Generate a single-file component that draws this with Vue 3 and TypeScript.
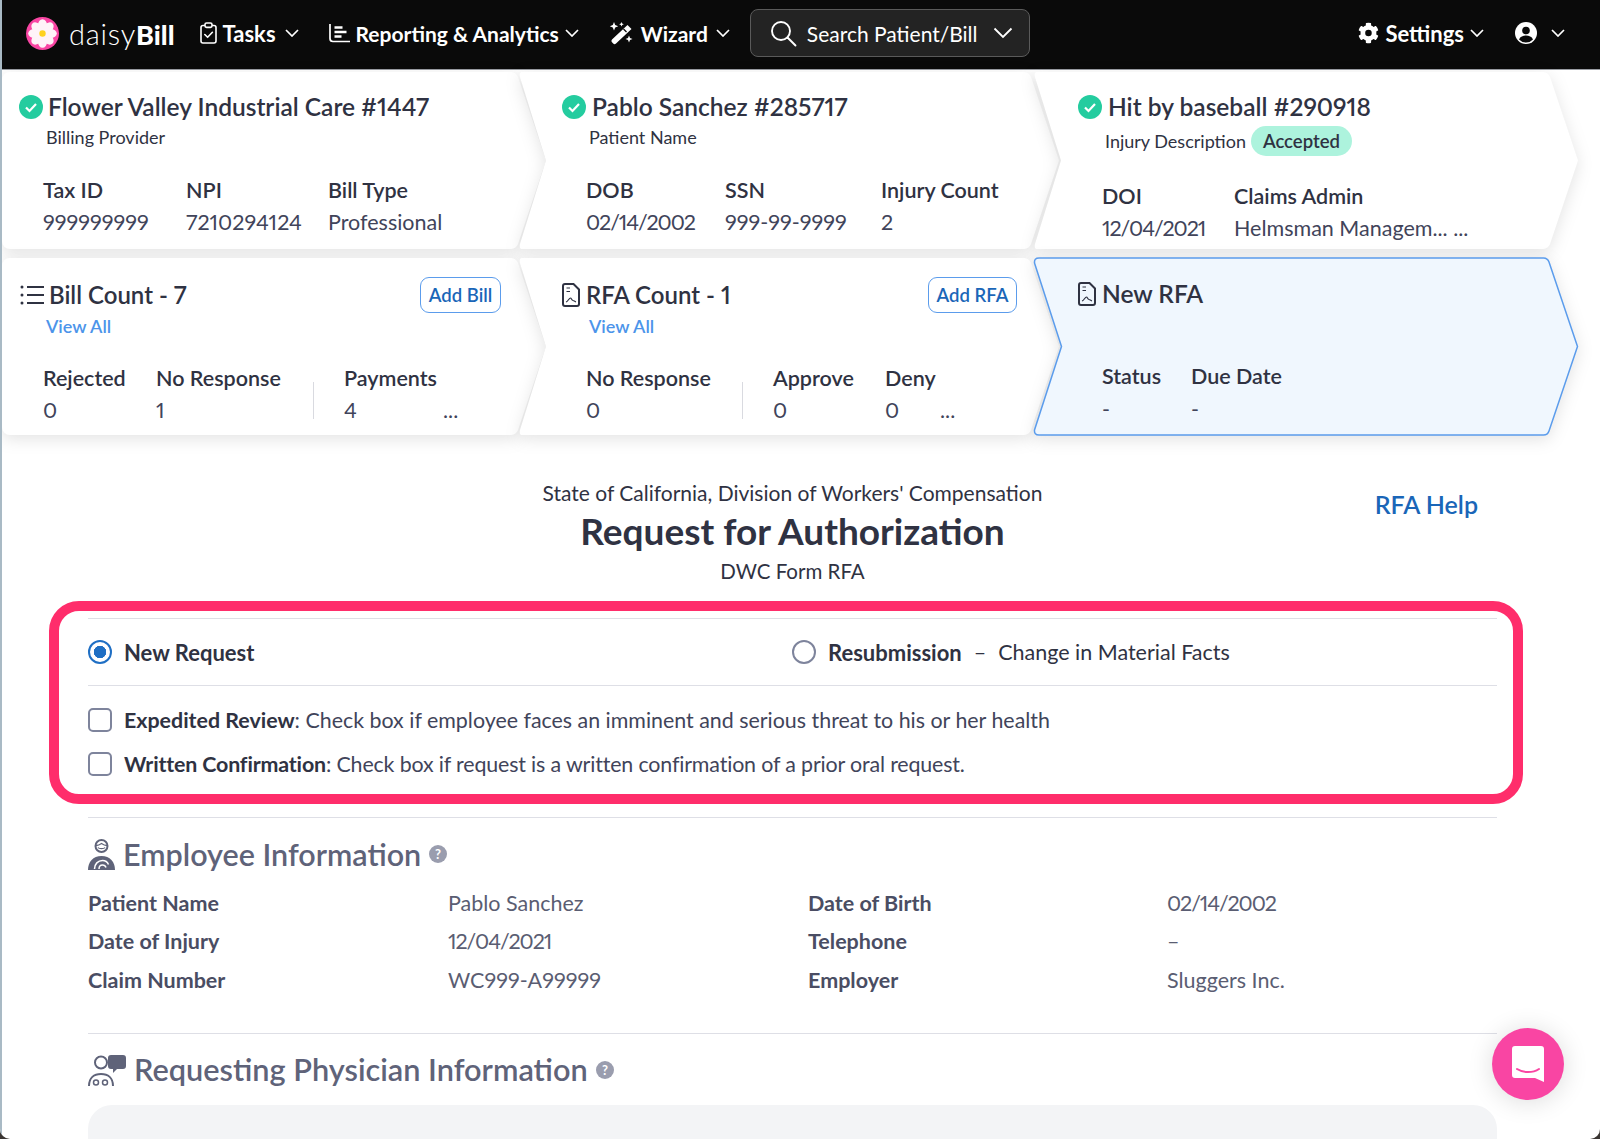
<script setup lang="ts">
interface Cell { label: string; value: string; left: number; date?: boolean }
const c1: Cell[] = [
  { label: 'Tax ID', value: '999999999', left: 41 },
  { label: 'NPI', value: '7210294124', left: 184 },
  { label: 'Bill Type', value: 'Professional', left: 326 },
]
const c2: Cell[] = [
  { label: 'DOB', value: '02/14/2002', left: 66, date: true },
  { label: 'SSN', value: '999-99-9999', left: 205 },
  { label: 'Injury Count', value: '2', left: 361 },
]
const c3: Cell[] = [
  { label: 'DOI', value: '12/04/2021', left: 67, date: true },
  { label: 'Claims Admin', value: 'Helmsman Managem... ...', left: 199 },
]
const c4: Cell[] = [
  { label: 'Rejected', value: '0', left: 41 },
  { label: 'No Response', value: '1', left: 154 },
  { label: 'Payments', value: '4', left: 342 },
]
const c5: Cell[] = [
  { label: 'No Response', value: '0', left: 66 },
  { label: 'Approve', value: '0', left: 253 },
  { label: 'Deny', value: '0', left: 365 },
]
const c6: Cell[] = [
  { label: 'Status', value: '-', left: 67 },
  { label: 'Due Date', value: '-', left: 156 },
]
const info = [
  ['Patient Name', 'Pablo Sanchez', 'Date of Birth', '02/14/2002'],
  ['Date of Injury', '12/04/2021', 'Telephone', '–'],
  ['Claim Number', 'WC999-A99999', 'Employer', 'Sluggers Inc.'],
]
const isDate = (s: string) => /^\d\d\/\d\d\/\d{4}$/.test(s)
const petals = [0, 45, 90, 135, 180, 225, 270, 315]
</script>

<template>
  <div class="page">
    <header class="nav">
      <div class="logo">
        <svg width="33" height="33" viewBox="0 0 33 33">
          <circle cx="16.5" cy="16.5" r="16.5" fill="#f945a3" />
          <ellipse v-for="a in petals" :key="a" cx="16.5" cy="8.6" rx="4.6" ry="6.4" fill="#fff3f8" :transform="`rotate(${a} 16.5 16.5)`" />
          <circle cx="16.5" cy="16.5" r="3.2" fill="#ffd21f" />
        </svg>
        <span class="brand"><span class="thin">daisy</span><b>Bill</b></span>
      </div>
      <div class="nav-item tasks">
        <svg width="17" height="22" viewBox="0 0 17 22" fill="none" stroke="#fff" stroke-width="1.6">
          <rect x="1" y="3.5" width="15" height="17.5" rx="2" />
          <rect x="5" y="1" width="7" height="4.4" rx="1.6" fill="#0a0a0a" />
          <path d="M4.8 12.5l2.8 2.8 4.8-5" stroke-linecap="round" stroke-linejoin="round" />
        </svg>
        <span>Tasks</span>
        <svg class="chev" width="14" height="8" viewBox="0 0 14 8" fill="none" stroke="#fff" stroke-width="1.7"><path d="M1 1l6 6 6-6" /></svg>
      </div>
      <div class="nav-item reporting">
        <svg width="21" height="20" viewBox="0 0 21 20" fill="none" stroke="#fff" stroke-width="1.7">
          <path d="M1 1v14.5a3 3 0 003 3h17" />
          <path d="M5.5 4.5h8M5.5 9h12M5.5 13.500h7" stroke-width="2.300" />
        </svg>
        <span>Reporting &amp; Analytics</span>
        <svg class="chev" width="14" height="8" viewBox="0 0 14 8" fill="none" stroke="#fff" stroke-width="1.7"><path d="M1 1l6 6 6-6" /></svg>
      </div>
      <div class="nav-item wizard">
        <svg width="24" height="23" viewBox="0 0 24 23" fill="#fff">
          <path d="M18.500 3l4 4L7 21.500a2 2 0 01-2.800 0l-1.200-1.200a2 2 0 010-2.800z" />
          <path d="M5 0l1.200 3 3 1.200-3 1.200L5 8.500 3.800 5.400l-3-1.200 3-1.200zM20 13.500l1 2.500 2.500 1-2.500 1-1 2.500-1-2.500-2.500-1 2.500-1zM12.500 0l.7 1.600 1.600.7-1.600.7-.7 1.600-.7-1.600-1.600-.7 1.600-.7z" />
          <path d="M14.500 7l3 3" stroke="#0a0a0a" stroke-width="1.200" />
        </svg>
        <span>Wizard</span>
        <svg class="chev" width="14" height="8" viewBox="0 0 14 8" fill="none" stroke="#fff" stroke-width="1.7"><path d="M1 1l6 6 6-6" /></svg>
      </div>
      <div class="search">
        <svg width="27" height="27" viewBox="0 0 27 27" fill="none" stroke="#fff" stroke-width="1.900">
          <circle cx="11" cy="11" r="9" /><path d="M17.500 17.500l8 8" stroke-linecap="round" />
        </svg>
        <span>Search Patient/Bill</span>
        <svg width="20" height="12" viewBox="0 0 20 12" fill="none" stroke="#fff" stroke-width="1.800"><path d="M1.500 1.500l8.500 8.500 8.500-8.500" /></svg>
      </div>
      <div class="nav-item settings">
        <svg width="21" height="22" viewBox="0 0 512 512" fill="#fff">
          <path d="M487 316l-42-25a190 190 0 000-70l42-25c5-3 7-9 5-14a249 249 0 00-55-95c-4-4-10-5-15-2l-42 24a190 190 0 00-61-35V26c0-6-4-11-9-12a251 251 0 00-110 0c-5 1-9 6-9 12v48a190 190 0 00-61 35L88 85c-5-3-11-2-15 2a248 248 0 00-55 95c-2 5 0 11 5 14l42 25a190 190 0 000 70l-42 25c-5 3-7 9-5 14a249 249 0 0055 95c4 4 10 5 15 2l42-24a190 190 0 0061 35v48c0 6 4 11 9 12a251 251 0 00110 0c5-1 9-6 9-12v-48a190 190 0 0061-35l42 24c5 3 11 2 15-2a248 248 0 0055-95c2-5 0-11-5-14zM255 336a80 80 0 110-160 80 80 0 010 160z" />
        </svg>
        <span>Settings</span>
        <svg class="chev" width="14" height="8" viewBox="0 0 14 8" fill="none" stroke="#fff" stroke-width="1.7"><path d="M1 1l6 6 6-6" /></svg>
      </div>
      <div class="nav-item user">
        <svg width="22" height="22" viewBox="0 0 22 22">
          <circle cx="11" cy="11" r="11" fill="#fff" />
          <circle cx="11" cy="8.500" r="3.800" fill="#0a0a0a" />
          <path d="M4 17.500c1.200-3 4-4 7-4s5.800 1 7 4a9.500 9.500 0 01-14 0z" fill="#0a0a0a" />
        </svg>
        <svg class="chev" width="14" height="8" viewBox="0 0 14 8" fill="none" stroke="#fff" stroke-width="1.7"><path d="M1 1l6 6 6-6" /></svg>
      </div>
    </header>

    <section class="cards">
      <article class="card">
        <svg class="shape" width="546" height="177" viewBox="0 0 546 177"><path d="M8 0H509a8 8 0 0 1 7 5l28 83.500L516 172a8 8 0 0 1-7 5H8a8 8 0 0 1-8-8V8a8 8 0 0 1 8-8z" fill="#fff" /></svg>
        <div class="title t-a">
          <svg class="ok" width="24" height="24" viewBox="0 0 24 24"><circle cx="12" cy="12" r="12" fill="#24cc9f" /><path d="M7 12.500l3.500 3.500 6.500-7" fill="none" stroke="#fff" stroke-width="2.200" /></svg>
          <span>Flower Valley Industrial Care #1447</span>
        </div>
        <div class="sub" style="left:44px">Billing Provider</div>
        <template v-for="c in c1" :key="c.label">
          <div class="lbl" :style="{ left: c.left + 'px', top: '106px' }">{{ c.label }}</div>
          <div class="val" :style="{ left: c.left + 'px', top: '138px' }">{{ c.value }}</div>
        </template>
      </article>
      <article class="card">
        <svg class="shape shift" width="541" height="177" viewBox="0 0 541 177"><path d="M4 0H506a8 8 0 0 1 7 5l28 83.500L513 172a8 8 0 0 1-7 5H4q-3 0-2-5l26-83.500L2 5q-1-5 2-5z" fill="#fff" /></svg>
        <div class="title t-b">
          <svg class="ok" width="24" height="24" viewBox="0 0 24 24"><circle cx="12" cy="12" r="12" fill="#24cc9f" /><path d="M7 12.500l3.500 3.500 6.500-7" fill="none" stroke="#fff" stroke-width="2.200" /></svg>
          <span>Pablo Sanchez #285717</span>
        </div>
        <div class="sub" style="left:69px">Patient Name</div>
        <template v-for="c in c2" :key="c.label">
          <div class="lbl" :style="{ left: c.left + 'px', top: '106px' }">{{ c.label }}</div>
          <div class="val" :class="{ date: c.date }" :style="{ left: c.left + 'px', top: '138px' }">{{ c.value }}</div>
        </template>
      </article>
      <article class="card">
        <svg class="shape shift" width="545" height="177" viewBox="0 0 545 177"><path d="M4 0H510a8 8 0 0 1 7 5l28 83.500L517 172a8 8 0 0 1-7 5H4q-3 0-2-5l26-83.500L2 5q-1-5 2-5z" fill="#fff" /></svg>
        <div class="title t-c">
          <svg class="ok" width="24" height="24" viewBox="0 0 24 24"><circle cx="12" cy="12" r="12" fill="#24cc9f" /><path d="M7 12.500l3.500 3.500 6.500-7" fill="none" stroke="#fff" stroke-width="2.200" /></svg>
          <span>Hit by baseball #290918</span>
        </div>
        <div class="sub sub-row" style="left:70px">Injury Description <span class="badge">Accepted</span></div>
        <template v-for="c in c3" :key="c.label">
          <div class="lbl" :style="{ left: c.left + 'px', top: '112px' }">{{ c.label }}</div>
          <div class="val" :class="{ date: c.date }" :style="{ left: c.left + 'px', top: '144px' }">{{ c.value }}</div>
        </template>
      </article>

      <article class="card">
        <svg class="shape" width="546" height="177" viewBox="0 0 546 177"><path d="M8 0H509a8 8 0 0 1 7 5l28 83.500L516 172a8 8 0 0 1-7 5H8a8 8 0 0 1-8-8V8a8 8 0 0 1 8-8z" fill="#fff" /></svg>
        <div class="title t-a row2">
          <svg class="ic-list" width="24" height="20" viewBox="0 0 24 20" fill="none" stroke="#2f3242" stroke-width="2">
            <path d="M7 2h17M7 10h17M7 18h17" /><circle cx="2" cy="2" r="1.500" fill="#2f3242" stroke="none" /><circle cx="2" cy="10" r="1.500" fill="#2f3242" stroke="none" /><circle cx="2" cy="18" r="1.500" fill="#2f3242" stroke="none" />
          </svg>
          <span>Bill Count - 7</span>
        </div>
        <a class="view" style="left:44px">View All</a>
        <button class="add add-bill">Add Bill</button>
        <template v-for="c in c4" :key="c.label">
          <div class="lbl" :style="{ left: c.left + 'px', top: '108px' }">{{ c.label }}</div>
          <div class="val" :style="{ left: c.left + 'px', top: '140px' }">{{ c.value }}</div>
        </template>
        <i class="divider" style="left:311px"></i>
        <div class="val dots" style="left:441px">...</div>
      </article>
      <article class="card">
        <svg class="shape shift" width="541" height="177" viewBox="0 0 541 177"><path d="M4 0H506a8 8 0 0 1 7 5l28 83.500L513 172a8 8 0 0 1-7 5H4q-3 0-2-5l26-83.500L2 5q-1-5 2-5z" fill="#fff" /></svg>
        <div class="title t-b row2">
          <svg class="ic-doc" width="18" height="24" viewBox="0 0 18 24" fill="none" stroke="#2f3242" stroke-width="2">
            <path d="M3 1h8.500L17 6.500V21a2 2 0 01-2 2H3a2 2 0 01-2-2V3a2 2 0 012-2z" />
            <path d="M4.500 5h3.500M4.500 8.500h3.500M4 19c2-.5 3-4 4.500-4 1 0 1 2.500 2.500 2.500.8 0 1.500 1 3 1.500" stroke-width="1.200" />
          </svg>
          <span>RFA Count - 1</span>
        </div>
        <a class="view" style="left:69px">View All</a>
        <button class="add add-rfa">Add RFA</button>
        <template v-for="c in c5" :key="c.label">
          <div class="lbl" :style="{ left: c.left + 'px', top: '108px' }">{{ c.label }}</div>
          <div class="val" :style="{ left: c.left + 'px', top: '140px' }">{{ c.value }}</div>
        </template>
        <i class="divider" style="left:222px"></i>
        <div class="val dots" style="left:420px">...</div>
      </article>
      <article class="card active">
        <svg class="shape shift" width="545" height="179" viewBox="0 0 545 179"><path d="M6 1H510a6 6 0 0 1 6 4l28.500 84.500L516 174a6 6 0 0 1-6 4H6q-5 0-4.500-5l27-83.500L1.500 6Q1 1 6 1z" fill="#f0f7fe" stroke="#5b9cec" stroke-width="1.500" /></svg>
        <div class="title t-c t-new">
          <svg class="ic-doc" width="18" height="24" viewBox="0 0 18 24" fill="none" stroke="#2f3242" stroke-width="2">
            <path d="M3 1h8.500L17 6.500V21a2 2 0 01-2 2H3a2 2 0 01-2-2V3a2 2 0 012-2z" />
            <path d="M4.500 5h3.500M4.500 8.500h3.500M4 19c2-.5 3-4 4.500-4 1 0 1 2.500 2.500 2.500.8 0 1.500 1 3 1.500" stroke-width="1.200" />
          </svg>
          <span>New RFA</span>
        </div>
        <template v-for="c in c6" :key="c.label">
          <div class="lbl" :style="{ left: c.left + 'px', top: '106px' }">{{ c.label }}</div>
          <div class="val" :style="{ left: c.left + 'px', top: '139px' }">{{ c.value }}</div>
        </template>
      </article>
    </section>

    <main class="content">
      <div class="head">
        <div class="state">State of California, Division of Workers' Compensation</div>
        <h1>Request for Authorization</h1>
        <div class="form">DWC Form RFA</div>
        <a class="help">RFA Help</a>
      </div>

      <div class="request">
        <div class="radios">
          <label class="radio-a"><i class="radio on"></i><b>New Request</b></label>
          <label class="radio-b"><i class="radio"></i><b>Resubmission</b><span class="dash">–</span><span>Change in Material Facts</span></label>
        </div>
        <div class="checks">
          <label><i class="box"></i><span><b>Expedited Review</b>: Check box if employee faces an imminent and serious threat to his or her health</span></label>
          <label class="tight"><i class="box"></i><span><b>Written Confirmation</b>: Check box if request is a written confirmation of a prior oral request.</span></label>
        </div>
        <div class="highlight"></div>
      </div>

      <div class="section employee">
        <h2>
          <svg width="27" height="31" viewBox="0 0 27 31" fill="#5f6379">
            <circle cx="13.500" cy="7" r="6" fill="none" stroke="#5f6379" stroke-width="2" />
            <path d="M8 6.500c2 0 3.500-.5 5.500-2 2 1.500 3.500 2 5.500 2M10 8.500c1 1.500 6 1.500 7 0" fill="none" stroke="#5f6379" stroke-width="1.300" />
            <path d="M0 31c0-8 5-14 13.500-14S27 23 27 31z" />
            <path d="M6.500 30c0-5 3.500-8.500 8-8.500 3 0 5 1.500 6 4M11 30c0-2.500 1.500-4 3.500-4s3 1 3.500 2.500" fill="none" stroke="#fff" stroke-width="1.500" />
          </svg>
          <span>Employee Information</span>
          <svg class="q" width="18" height="18" viewBox="0 0 18 18"><circle cx="9" cy="9" r="9" fill="#9a9dae" /><text x="9" y="13.500" text-anchor="middle" font-size="13" font-weight="700" font-family="Lato, sans-serif" fill="#fff">?</text></svg>
        </h2>
        <div class="info">
          <template v-for="r in info" :key="r[0]">
            <b>{{ r[0] }}</b><span :class="{ date: isDate(r[1]) }">{{ r[1] }}</span><b>{{ r[2] }}</b><span :class="{ date: isDate(r[3]) }">{{ r[3] }}</span>
          </template>
        </div>
      </div>

      <div class="section physician">
        <h2>
          <svg width="38" height="31" viewBox="0 0 38 31" fill="#5f6379">
            <circle cx="13" cy="7.500" r="6" fill="none" stroke="#5f6379" stroke-width="2" />
            <path d="M23 0h12a3 3 0 013 3v8a3 3 0 01-3 3h-6l-4 4v-4h-2a3 3 0 01-3-3V3a3 3 0 013-3z" />
            <path d="M1 31c0-8 5-12 12-12s12 4 12 12" fill="none" stroke="#5f6379" stroke-width="2" />
            <circle cx="8" cy="27.500" r="2.500" fill="none" stroke="#5f6379" stroke-width="1.500" />
            <circle cx="17" cy="27.500" r="2.500" fill="none" stroke="#5f6379" stroke-width="1.500" />
          </svg>
          <span>Requesting Physician Information</span>
          <svg class="q" width="18" height="18" viewBox="0 0 18 18"><circle cx="9" cy="9" r="9" fill="#9a9dae" /><text x="9" y="13.500" text-anchor="middle" font-size="13" font-weight="700" font-family="Lato, sans-serif" fill="#fff">?</text></svg>
        </h2>
        <div class="panel"></div>
      </div>
    </main>

    <button class="chat" aria-label="Chat">
      <svg width="32" height="36" viewBox="0 0 32 36">
        <path d="M3 0h26a3 3 0 013 3v33l-9-4H3a3 3 0 01-3-3V3a3 3 0 013-3z" fill="#fff" />
        <path d="M5 23c6 4 16 4 22 0" fill="none" stroke="#f945a3" stroke-width="2" stroke-linecap="round" />
      </svg>
    </button>
    <div class="edge"></div>
  </div>
</template>

<style>
html, body { margin: 0; background: #3a3532; }
</style>

<style scoped>
.page {
  position: relative;
  width: 1600px;
  height: 1139px;
  overflow: hidden;
  background: #fff;
  border-radius: 0 0 10px 10px;
  font-family: Lato, "Liberation Sans", sans-serif;
  font-variant-numeric: proportional-nums;
  color: #2f3242;
  box-sizing: border-box;
}
.edge {
  position: absolute;
  left: 0;
  top: 0;
  bottom: 0;
  width: 2px;
  background: #a9bac5;
  border-radius: 0 0 0 10px;
}
.nav {
  height: 70px;
  padding-bottom: 3px;
  background: #0a0a0a;
  display: flex;
  align-items: center;
  color: #fff;
  border-bottom: 1px solid #9a9da3;
  box-sizing: border-box;
  font-size: 22px;
  font-weight: 700;
}
.logo { display: flex; align-items: center; gap: 10px; margin-left: 26px; }
.brand { font-size: 29px; line-height: 1; font-family: Lato, sans-serif; }
.brand b { font-size: 27px; }
.thin { font-weight: 300; letter-spacing: .8px; }
.nav-item { display: flex; align-items: center; }
.tasks { margin-left: 25px; gap: 6px; }
.tasks .chev { margin-left: 3px; }
.reporting { margin-left: 30px; gap: 6px; font-size: 21px; }
.wizard { margin-left: 30px; gap: 8px; font-size: 21px; }
.settings { margin-left: auto; gap: 6px; }
.user { margin-left: 31px; margin-right: 35px; gap: 14px; }
.search {
  margin-left: 20px;
  width: 280px;
  height: 48px;
  box-sizing: border-box;
  background: #232323;
  border: 1.500px solid #5a5a5a;
  border-radius: 8px;
  display: flex;
  align-items: center;
  padding: 0 16px 0 19px;
  gap: 10px;
  font-size: 21px;
  font-weight: 400;
  white-space: nowrap;
}
.search span { flex: 1; }
.cards {
  display: grid;
  grid-template-columns: 518px 515px 515px;
  grid-template-rows: 177px 177px;
  row-gap: 9px;
  padding: 2px 0 0 2px;
  height: 365px;
  box-sizing: border-box;
}
.card { position: relative; font-size: 21.500px; }
.shape {
  position: absolute;
  left: 0;
  top: 0;
  overflow: visible;
  filter: drop-shadow(0 4px 8px rgba(0, 0, 0, .11));
}
.shape.shift { left: -2px; }
.card.active .shape { top: -1px; }
.title {
  position: absolute;
  top: 21px;
  display: flex;
  align-items: center;
  font-size: 24.500px;
  line-height: 28px;
  font-weight: 600;
  gap: 6px;
  white-space: nowrap;
}
.row2 { top: 23px; font-size: 24px; }
.t-a { left: 17px; gap: 5px; }
.t-b { left: 42px; }
.t-c { left: 43px; }
.t-new { top: 22px; }
.ok { flex: none; }
.ic-list { margin: 0 0 0 1px; }
.sub { position: absolute; top: 55px; font-size: 18px; line-height: 20px; white-space: nowrap; }
.sub-row { display: flex; align-items: center; gap: 5px; top: 54px; line-height: 30px; }
.badge {
  background: #adf3dd;
  border-radius: 15px;
  padding: 0 12px;
  height: 30px;
  font-size: 18.500px;
  font-weight: 600;
}
.lbl, .val { position: absolute; font-size: 21.500px; line-height: 24px; white-space: nowrap; }
.lbl { font-weight: 600; }
.val { color: #41445a; }
.date { letter-spacing: -1.100px; }
.dots { top: 140px; }
.view { position: absolute; top: 58px; font-size: 18px; line-height: 20px; color: #4c94ea; font-weight: 600; }
.add {
  position: absolute;
  top: 19px;
  height: 36px;
  box-sizing: border-box;
  background: #fff;
  border: 1.500px solid #5b9cec;
  border-radius: 9px;
  color: #1a66b8;
  font: 600 18.500px Lato, sans-serif;
  padding: 0;
}
.add-bill { left: 418px; width: 81px; }
.add-rfa { left: 408px; width: 89px; }
.divider { position: absolute; top: 124px; height: 37px; width: 1px; background: #d9dae0; }
.content { padding: 0 103px 0 88px; position: relative; }
.head { position: relative; text-align: center; height: 183px; box-sizing: border-box; padding-top: 44px; }
.state { font-size: 21px; line-height: 28px; }
h1 { margin: 2px 0 5px; font-size: 37px; line-height: 44px; font-weight: 700; }
.form { font-size: 20.500px; line-height: 26px; }
.help { position: absolute; right: 19px; top: 55px; font-size: 25px; line-height: 28px; color: #1a66b8; font-weight: 600; }
.request { position: relative; }
.radios {
  display: flex;
  align-items: center;
  height: 66px;
  border-top: 1.500px solid #dedfe6;
  border-bottom: 1.500px solid #dedfe6;
  box-sizing: content-box;
  font-size: 21.500px;
}
.radios b { font-size: 22px; }
label { display: flex; align-items: center; }
.radio-a { gap: 12px; width: 704px; margin-left: 0; }
.radio-b { gap: 12px; margin-left: 0; }
.radio { width: 24px; height: 24px; border-radius: 50%; border: 2px solid #7e849c; box-sizing: border-box; background: #fff; flex: none; position: relative; }
.radio.on { border-color: #1f6fc4; background: radial-gradient(circle, #1f6fc4 0 6px, #fff 6.500px); }
.checks { display: flex; flex-direction: column; gap: 20px; padding: 22px 0 0; height: 132px; box-sizing: border-box; border-bottom: 1.500px solid #dedfe6; font-size: 21.400px; color: #41445a; }
.checks label { gap: 12px; height: 24px; }
.checks .tight span { letter-spacing: -.15px; }
.checks b { color: #2f3242; }
.box { width: 24px; height: 24px; border: 2px solid #7e849c; border-radius: 5px; box-sizing: border-box; flex: none; }
.highlight {
  position: absolute;
  left: -39px;
  top: -17px;
  width: 1474px;
  height: 203px;
  border: 10px solid #ff2d6b;
  border-radius: 30px;
  box-sizing: border-box;
}
.section h2 { margin: 0; display: flex; align-items: center; color: #5f6379; font-size: 30.700px; line-height: 36px; font-weight: 600; }
.employee { height: 216px; border-bottom: 1.500px solid #dedfe6; box-sizing: border-box; padding-top: 18px; }
.employee h2 { gap: 8px; font-size: 30.500px; }
.q { flex: none; margin-left: 0; }
.info {
  display: grid;
  grid-template-columns: 360px 360px 359px 1fr;
  grid-auto-rows: 38.300px;
  margin-top: 12px;
  font-size: 21.500px;
  line-height: 38px;
  color: #5a5d72;
}
.info b { color: #4a4d63; }
.physician { padding-top: 18px; }
.physician h2 { gap: 8px; }
.panel { height: 60px; margin-top: 17px; background: #f3f4f6; border-radius: 24px 24px 0 0; }
.chat {
  position: absolute;
  left: 1492px;
  top: 1028px;
  width: 72px;
  height: 72px;
  border: 0;
  padding: 0;
  border-radius: 50%;
  background: #f945a3;
  display: flex;
  align-items: center;
  justify-content: center;
  box-shadow: 0 2px 26px rgba(0, 0, 0, .14);
}
</style>
